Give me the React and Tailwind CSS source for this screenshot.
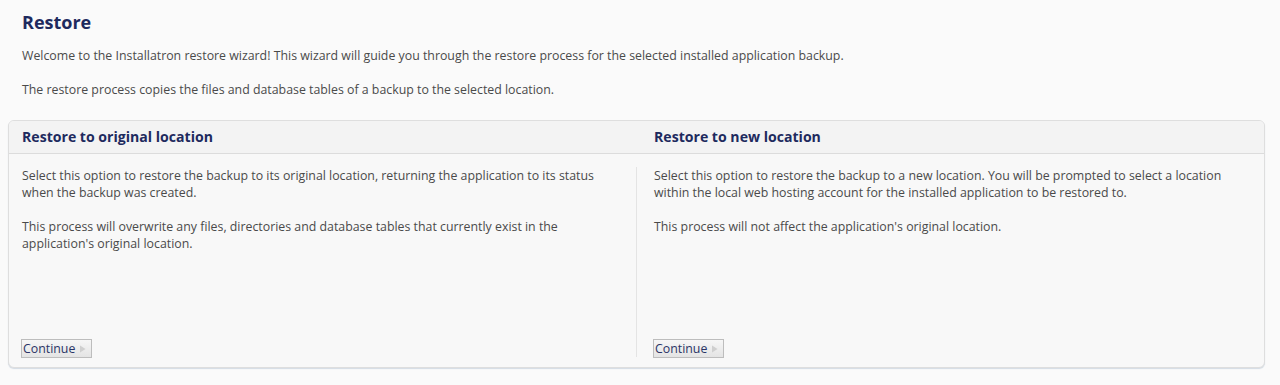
export default function App() {
  const font = { fontFamily: '"Open Sans", "Noto Sans", sans-serif' };
  return (
    <div className="min-h-[385px] bg-[#fafafa] text-[12.35px] text-[#4a4a4a]" style={font}>
      <div className="px-[22px] pt-[10px]">
        <h1 className="text-[18px] font-bold leading-[24px] text-[#1e2a5e]">Restore</h1>
        <p className="mt-[13px] leading-[17px]">
          Welcome to the Installatron restore wizard! This wizard will guide you through the restore process for the selected installed application backup.
        </p>
        <p className="mt-[17px] leading-[17px]">
          The restore process copies the files and database tables of a backup to the selected location.
        </p>
      </div>
      <div className="mx-[8px] mt-[22px] w-[1257px] overflow-hidden rounded-[6px] border border-[#dedede] bg-[#f8f8f8] shadow-[0_1px_1px_#d3dbe4]">
        <div className="grid grid-cols-[627px_1fr] border-b border-[#dcdcdc] bg-[#f3f3f3]">
          <h2 className="h-[32px] pl-[13px] text-[14.1px] font-bold leading-[31px] text-[#1e2a5e]">Restore to original location</h2>
          <h2 className="h-[32px] pl-[18px] text-[14.1px] font-bold leading-[31px] text-[#1e2a5e]">Restore to new location</h2>
        </div>
        <div className="grid grid-cols-[627px_1fr] pt-[13px] pb-[10px]">
          <div className="flex h-[190px] flex-col justify-between pl-[13px] pr-[30px]">
            <div className="leading-[17px]">
              <p>Select this option to restore the backup to its original location, returning the application to its status when the backup was created.</p>
              <p className="mt-[17px]">This process will overwrite any files, directories and database tables that currently exist in the application's original location.</p>
            </div>
            <ContinueButton />
          </div>
          <div className="flex h-[190px] flex-col justify-between border-l border-[#e4e4e4] pl-[17px] pr-[30px]">
            <div className="leading-[17px]">
              <p>Select this option to restore the backup to a new location. You will be prompted to select a location within the local web hosting account for the installed application to be restored to.</p>
              <p className="mt-[17px]">This process will not affect the application's original location.</p>
            </div>
            <ContinueButton />
          </div>
        </div>
      </div>
    </div>
  );
}

function ContinueButton() {
  return (
    <button className="mb-[-1px] ml-[-1px] flex h-[19px] w-[71px] items-center gap-[4px] border border-[#bdbdbd] bg-gradient-to-b from-[#f6f6f6] to-[#e4e4e4] pl-[1px] text-[12.35px] leading-[17px] text-[#2a3466]">
      <span>Continue</span>
      <svg width="7" height="8" viewBox="0 0 7 8">
        <path d="M1 0.5 L6.5 4 L1 7.5 Z" fill="#cfcfcf" />
      </svg>
    </button>
  );
}
